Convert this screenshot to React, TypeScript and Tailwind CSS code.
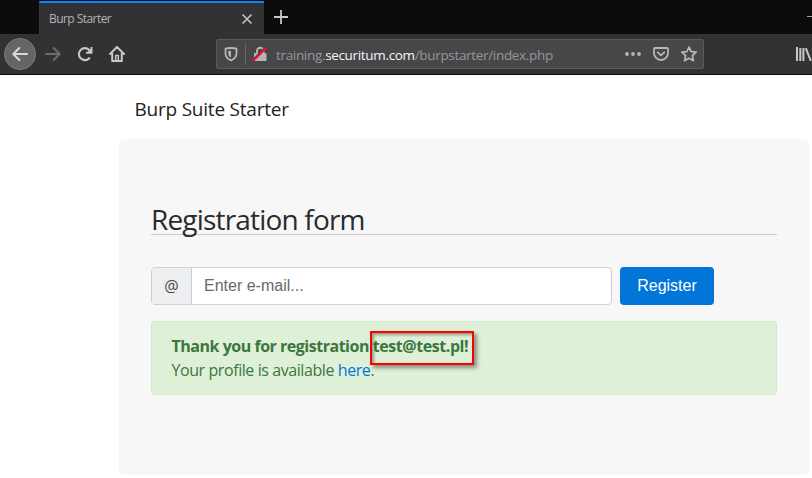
import React from "react";

function TabStrip() {
  return (
    <div className="flex h-[34px] items-start bg-[#0c0c0d]">
      <div className="ml-[39px] mt-px flex h-[33px] w-[225px] items-center border-l border-t-2 border-l-[#3a3a3c] border-t-[#0a84ff] bg-[#323234] pl-[9px] pr-[11px]">
        <span className="text-[12px] leading-4 tracking-[-0.550px] text-[#b4b4b6]">Burp Starter</span>
        <svg className="ml-auto" width="12" height="12" viewBox="0 0 12 12" fill="none" stroke="#c4c4c5" strokeWidth="1.6">
          <path d="M1.5 1.5l9 9M10.5 1.5l-9 9" />
        </svg>
      </div>
      <svg className="ml-[10px] mt-[10px]" width="14" height="14" viewBox="0 0 14 14" fill="none" stroke="#c8c8c9" strokeWidth="1.8">
        <path d="M7 0v14M0 7h14" />
      </svg>
      <div className="ml-auto mt-[16px] h-px w-[5px] bg-[#a0a0a0]" />
    </div>
  );
}

function AddressBar() {
  return (
    <div className="ml-[91px] flex h-[30px] w-[488px] items-center rounded-[2px] border border-[#5b5b5e] bg-[#474749]">
      <svg className="ml-[6px] shrink-0" width="16" height="16" viewBox="0 0 16 16">
        <path d="M8 2C6 2 4 2.2 2.500 2.700v4.700c0 3.400 2.500 5.600 5.500 6.900 3-1.300 5.500-3.500 5.500-6.900V2.700C12 2.200 10 2 8 2z" fill="none" stroke="#b6b6b7" strokeWidth="1.800" strokeLinejoin="round" />
        <path d="M8 4.700c-1.100 0-1.900.1-2.700.3v2.700c0 1.900 1.200 3.100 2.700 3.900z" fill="#b6b6b7" />
      </svg>
      <div className="ml-[6px] h-[22px] w-px shrink-0 bg-[#65656b]" />
      <svg className="ml-[6px] shrink-0" width="16" height="16" viewBox="0 0 16 16">
        <path d="M5 8V5a3.200 3.200 0 0 1 6.400 0v3" fill="none" stroke="#b6b6b7" strokeWidth="1.900" />
        <rect x="2" y="7" width="12.500" height="8" rx="1" fill="#b6b6b7" />
        <path d="M0.500 14L13.500 1" stroke="#474749" strokeWidth="1.500" />
        <path d="M1 15L14.500 1.500" stroke="#f5093b" strokeWidth="2" />
      </svg>
      <span className="ml-[8px] mt-px whitespace-nowrap text-[13.500px] leading-5 tracking-[-0.330px] text-[#969698]">
        training.<span className="text-[#f4f4f5]">securitum.com</span>/burpstarter/index.php
      </span>
      <div className="ml-auto mr-[6px] flex items-center gap-[12px]">
        <svg width="16" height="16" viewBox="0 0 16 16" fill="#b6b6b7">
          <circle cx="2" cy="8" r="1.900" />
          <circle cx="8" cy="8" r="1.900" />
          <circle cx="14" cy="8" r="1.900" />
        </svg>
        <svg width="16" height="16" viewBox="0 0 16 16" fill="none" stroke="#b6b6b7" strokeWidth="1.800" strokeLinecap="round" strokeLinejoin="round">
          <path d="M2 2h12a1 1 0 0 1 1 1v4a7 7 0 0 1-14 0V3a1 1 0 0 1 1-1z" />
          <path d="M4.700 6.300L8 9.400l3.300-3.100" />
        </svg>
        <svg width="16" height="16" viewBox="0 0 16 16" fill="none" stroke="#b6b6b7" strokeWidth="1.800" strokeLinejoin="round">
          <path d="M8 1.100l2.100 4.500 5 .6-3.700 3.400 1 5L8 12.200l-4.400 2.400 1-5L.9 6.200l5-.6z" />
        </svg>
      </div>
    </div>
  );
}

function Toolbar() {
  return (
    <div className="flex h-[41px] items-center border-b border-[#0c0c0d] bg-[#323234]">
      <div className="ml-[4px] flex h-8 w-8 shrink-0 items-center justify-center rounded-full border border-[#7c7c7d] bg-[#656566]">
        <svg width="16" height="16" viewBox="0 0 16 16" fill="none" stroke="#d8d8d8" strokeWidth="2" strokeLinecap="round" strokeLinejoin="round">
          <path d="M15 8H1.500M7.300 2L1.300 8l6 6" />
        </svg>
      </div>
      <svg className="ml-[9px] shrink-0" width="16" height="16" viewBox="0 0 16 16" fill="none" stroke="#6c6c6e" strokeWidth="1.900" strokeLinecap="round" strokeLinejoin="round">
        <path d="M1 8h13.500M8.700 2l6 6-6 6" />
      </svg>
      <svg className="ml-[16px] shrink-0" width="16" height="16" viewBox="0 0 16 16" fill="none" stroke="#c8c8c9" strokeWidth="2.100">
        <path d="M12.300 12.200A6 6 0 1 1 12.500 4.300" strokeLinecap="round" />
        <path d="M14.500 1v5.800H9" strokeWidth="1.900" />
        <path d="M14.500 2v4.800H10z" fill="#c8c8c9" stroke="none" />
      </svg>
      <svg className="ml-[16px] shrink-0" width="16" height="16" viewBox="0 0 16 16" fill="none" stroke="#c8c8c9" strokeWidth="2" strokeLinecap="round" strokeLinejoin="round">
        <path d="M1 8l7-7 7 7M3.200 7.500v7.400h9.600V7.500" />
        <path d="M6.700 14V9.500h2.600V14" strokeWidth="1.500" />
      </svg>
      <AddressBar />
      <svg className="ml-auto shrink-0" width="16" height="16" viewBox="0 0 16 16" fill="none" stroke="#c8c8c9" strokeWidth="2">
        <path d="M1 1v14M4.300 2v13M7.400 2v13" />
        <path d="M9.800 2.200l5 12.600" />
      </svg>
    </div>
  );
}

function Alert() {
  return (
    <div className="mt-4 h-[74px] rounded-[4px] border border-[#d0e9c6] bg-[#dff0d8] pl-[19.500px] pt-[12px] text-[16px] leading-6 text-[#3c763d]">
      <div className="flex whitespace-nowrap">
        <strong className="font-bold tracking-[-0.480px]">Thank you for registration&nbsp;</strong>
        <strong className="relative font-bold tracking-[-0.430px]">
          test@test.pl!
          <span className="absolute -left-[3px] -top-[3px] h-[34px] w-[104px] border-2 border-[#ff0000] shadow-[3px_3px_4px_rgba(0,0,0,0.4),inset_2px_2px_3px_rgba(0,0,0,0.35)]" />
        </strong>
      </div>
      <div className="whitespace-nowrap tracking-[-0.420px]">
        Your profile is available <a className="text-[#0275d8]">here</a>.
      </div>
    </div>
  );
}

export default function App() {
  return (
    <div className="h-[478px] w-[812px] overflow-hidden bg-white font-['Open_Sans','Noto_Sans',sans-serif]">
      <TabStrip />
      <Toolbar />
      <main className="ml-[119px] w-[690px]">
        <header className="flex h-16 items-center pl-[15.500px] pt-[3px]">
          <h1 className="whitespace-nowrap text-[19px] leading-7 tracking-[-0.220px] text-[#212324]">Burp Suite Starter</h1>
        </header>
        <section className="h-[336px] rounded-[5px] bg-[#f7f7f7] px-8 pt-[60px]">
          <div className="flex h-[36px] items-start border-b border-[#cccccc]">
            <h2 className="whitespace-nowrap text-[28px] leading-10 tracking-[-0.820px] text-[#292b2c]">Registration form</h2>
          </div>
          <form className="mt-8 flex h-[38px] gap-2" onSubmit={(e) => e.preventDefault()}>
            <div className="flex w-[461px] overflow-hidden rounded-[4px] border border-[#cfcfcf] bg-white">
              <span className="flex w-10 shrink-0 items-center justify-center border-r border-[#cfcfcf] bg-[#eceeef] text-[16px] text-[#464a4c]">@</span>
              <input
                className="min-w-0 flex-1 pl-3 font-['Liberation_Sans',sans-serif] text-[16px] outline-none placeholder:text-[#636c72] placeholder:opacity-100"
                placeholder="Enter e-mail..."
              />
            </div>
            <button className="w-[94px] rounded-[4px] bg-[#0275d8] font-['Liberation_Sans',sans-serif] text-[16px] text-white">Register</button>
          </form>
          <Alert />
        </section>
      </main>
    </div>
  );
}
